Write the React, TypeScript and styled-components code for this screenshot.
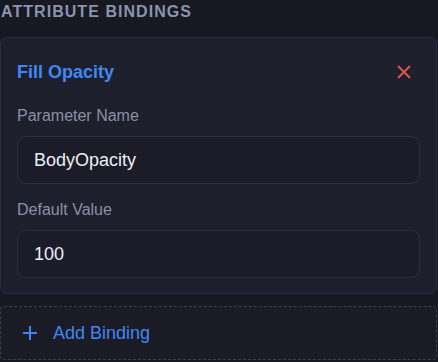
import React from "react";
import styled, { createGlobalStyle } from "styled-components";

const Global = createGlobalStyle`
  html, body {
    margin: 0;
    padding: 0;
    background: #171821;
    font-family: "Liberation Sans", Arial, sans-serif;
  }
  * { box-sizing: border-box; }
`;

const Panel = styled.div`
  width: 437px;
  height: 362px;
  overflow: hidden;
  display: flex;
  flex-direction: column;
`;

const Heading = styled.div`
  font-size: 16px;
  font-weight: 700;
  letter-spacing: 1.05px;
  color: #8b93ad;
  text-transform: uppercase;
  line-height: 24px;
  margin: 0 0 13px 1px;
`;

const Card = styled.div`
  background: #1e1f2c;
  border: 1px solid #2b2d3c;
  border-radius: 7px;
  padding: 16px 16px 15px;
  display: flex;
  flex-direction: column;
`;

const TitleRow = styled.div`
  display: flex;
  align-items: center;
  justify-content: space-between;
  height: 36px;
  margin-bottom: 16px;
`;

const Title = styled.div`
  font-size: 18px;
  font-weight: 700;
  color: #4087f5;
`;

const CloseButton = styled.button`
  background: none;
  border: none;
  padding: 0;
  width: 32px;
  height: 32px;
  display: flex;
  align-items: center;
  justify-content: center;
  color: #e0574a;
`;

const Field = styled.div<{ $last?: boolean }>`
  display: flex;
  flex-direction: column;
  margin-bottom: ${(p) => (p.$last ? 0 : 16)}px;
`;

const Label = styled.label`
  font-size: 16px;
  color: #8b90a5;
  line-height: 20px;
  margin-bottom: 10px;
`;

const Input = styled.div`
  height: 48px;
  border: 1px solid #2c2e3e;
  border-radius: 9px;
  background: #1b1c27;
  padding: 0 16px;
  display: flex;
  align-items: center;
  font-size: 18px;
  color: #eceef4;
`;

const AddButton = styled.button`
  margin-top: 12px;
  height: 54px;
  border: 1px dashed #3a3d4e;
  border-radius: 4px;
  background: #1a1b25;
  display: flex;
  align-items: center;
  gap: 15px;
  padding: 0 21px;
  color: #4087f5;
  font-family: "Liberation Sans", Arial, sans-serif;
  font-size: 18px;
`;

const XIcon = () => (
  <svg width="14" height="14" viewBox="0 0 14 14" fill="none" stroke="currentColor" strokeWidth="1.8">
    <path d="M1 1L13 13M13 1L1 13" />
  </svg>
);

const PlusIcon = () => (
  <svg width="16" height="16" viewBox="0 0 16 16" fill="none" stroke="currentColor" strokeWidth="2">
    <path d="M8 1V15M1 8H15" />
  </svg>
);

export default function App() {
  return (
    <>
      <Global />
      <Panel>
        <Heading>Attribute Bindings</Heading>
        <Card>
          <TitleRow>
            <Title>Fill Opacity</Title>
            <CloseButton aria-label="Remove">
              <XIcon />
            </CloseButton>
          </TitleRow>
          <Field>
            <Label>Parameter Name</Label>
            <Input>BodyOpacity</Input>
          </Field>
          <Field $last>
            <Label>Default Value</Label>
            <Input>100</Input>
          </Field>
        </Card>
        <AddButton>
          <PlusIcon />
          Add Binding
        </AddButton>
      </Panel>
    </>
  );
}
